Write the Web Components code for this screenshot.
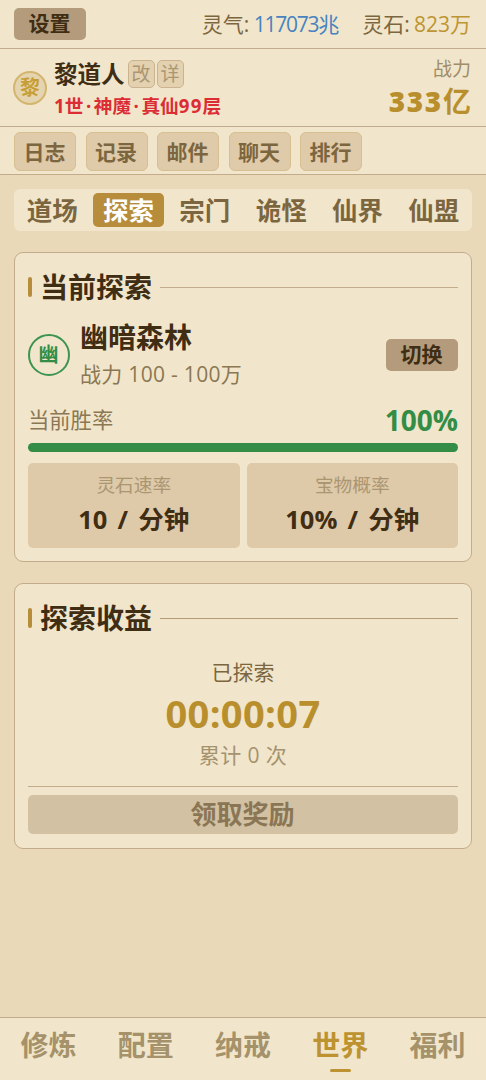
<!DOCTYPE html>
<html lang="zh-CN">
<head>
<meta charset="utf-8">
<title>探索</title>
<style>
html,body{margin:0;height:100%}
body{
  --ink:#3f2d14;--brown:#7c6640;--muted:#a5926e;--gold:#b98f2e;--green:#338d46;
  --paper:#f1e6cb;--line:#c3ac8b;--chip:#dfcaa9;--btn:#b39b7b;
  font-family:"Open Sans","Noto Sans CJK SC",sans-serif;color:var(--ink);background:#e9d9b8;
}
</style>
</head>
<body>
<game-app></game-app>
<script>
const define = (name, html) => {
  const tpl = document.createElement('template');
  tpl.innerHTML = html;
  customElements.define(name, class extends HTMLElement {
    constructor() {
      super();
      this.attachShadow({mode: 'open'}).append(tpl.content.cloneNode(true));
    }
  });
};

/* one line of text; size, leading and tracking come from custom properties */
define('text-line', `<style>
:host{display:block;white-space:nowrap;font-size:var(--s,21px);line-height:var(--h,28px);letter-spacing:var(--t,0);color:var(--c,inherit);font-weight:var(--w,400)}
</style><slot></slot>`);

define('solid-button', `<style>
:host{display:flex;align-items:center;justify-content:center;box-sizing:border-box;width:72px;height:32px;padding:0 1px 1px 0;border-radius:5px;background:var(--btn);font-size:21px;font-weight:700;line-height:1;white-space:nowrap}
:host([wide]){width:auto;height:39px;font-size:26px;background:#d2c1a3;color:#8a7654}
</style><slot></slot>`);

define('mini-badge', `<style>
:host{display:flex;align-items:center;justify-content:center;box-sizing:border-box;width:27px;height:28px;border:1.5px solid #cbb38f;border-radius:5px;background:#e3d1b0;color:#ab9673;font-size:19px;line-height:1}
</style><slot></slot>`);

define('round-seal', `<style>
:host{display:flex;flex:none;align-items:center;justify-content:center;box-sizing:border-box;width:34px;height:34px;padding-bottom:1px;border:2px solid #d3b56d;border-radius:50%;background:#e5d4b0;color:#c79e36;font-size:20px;font-weight:700;line-height:1}
:host([green]){width:42px;height:42px;padding:0 1px 0 0;border-color:#3c9450;background:none;color:#338d46}
</style><slot></slot>`);

define('resource-bar', `<style>
:host{display:flex;align-items:center;justify-content:space-between;box-sizing:border-box;height:49px;padding:0 15px 0 14px;border-bottom:1.5px solid var(--line)}
div{display:flex;gap:23px}
text-line{--c:#7c6640}
.k{letter-spacing:-.6px}
.q{color:#4683c0}.q b{font-weight:400;letter-spacing:-1.25px}.s{color:#bd9532}
</style><solid-button>设置</solid-button>
<div><text-line>灵气<span class="k">: </span><span class="q"><b>117073</b>兆</span></text-line><text-line>灵石<span class="k">: </span><span class="s">823万</span></text-line></div>`);

define('player-header', `<style>
:host{display:flex;box-sizing:border-box;height:78px;padding:0 15px 0 13px;border-bottom:1.5px solid var(--line)}
round-seal{margin-top:22px}
.id{margin-left:7px;padding-top:11px}
.n{display:flex;align-items:center;height:28px;gap:2px}
.n text-line{--s:23.5px;--w:700;margin-right:1px}
.r{--s:18.7px;--w:700;--c:#dc2c34;margin-top:4px}
.r span{margin:0 2.5px}
.r b{font-weight:700;letter-spacing:1.2px}
.p{margin-left:auto;padding-top:6px;text-align:right}
.p .a{--s:19px;--c:#a08c68}
.p .b{--s:28px;--w:700;--c:var(--gold);--h:36px}
.p b{font-weight:800;letter-spacing:1.7px}
</style><round-seal>黎</round-seal>
<div class="id"><div class="n"><text-line>黎道人</text-line><mini-badge>改</mini-badge><mini-badge>详</mini-badge></div><text-line class="r">1世<span>·</span>神魔<span>·</span>真仙<b>99</b>层</text-line></div>
<div class="p"><text-line class="a">战力</text-line><text-line class="b"><b>333</b>亿</text-line></div>`);

define('quick-link', `<style>
:host{display:flex;align-items:center;justify-content:center;box-sizing:border-box;width:62px;height:39px;padding:1px 1px 0 0;border:1.5px solid #d6bf91;border-radius:6px;background:var(--chip);color:#7c6640;font-size:21px;font-weight:700;line-height:1}
</style><slot></slot>`);

define('quick-links', `<style>
:host{display:flex;box-sizing:border-box;height:48px;padding:5px 14px 0;gap:9.5px;border-bottom:1.5px solid var(--line)}
</style><quick-link>日志</quick-link><quick-link>记录</quick-link><quick-link>邮件</quick-link><quick-link>聊天</quick-link><quick-link>排行</quick-link>`);

define('tab-item', `<style>
:host{display:flex;align-items:center;justify-content:center;margin:4px 3px;padding-top:1px;border-radius:5px;color:#7c6640;font-size:25.5px;font-weight:700;line-height:1}
:host([active]){background:#b78d3b;color:#fff}
</style><slot></slot>`);

define('world-tabs', `<style>
:host{display:grid;grid-template-columns:repeat(6,1fr);height:42px;margin:14px 14px 21px;border-radius:6px;background:var(--paper)}
</style><tab-item>道场</tab-item><tab-item active>探索</tab-item><tab-item>宗门</tab-item><tab-item>诡怪</tab-item><tab-item>仙界</tab-item><tab-item>仙盟</tab-item>`);

define('section-card', `<style>
:host{display:block;box-sizing:border-box;margin:0 14px 21px;padding:0 13px;border:1px solid var(--line);border-radius:9px;background:var(--paper)}
header{display:flex;align-items:center;height:36px;margin-top:16px}
i{width:4px;height:20px;border-radius:2px;background:#b78d3b;margin-right:8px}
hr{flex:1;height:1px;margin:0 0 0 8px;border:0;background:var(--rule,var(--line))}
text-line{--s:28px;--w:700;--h:36px}
</style><header><i></i><text-line><slot name="title"></slot></text-line><hr></header><slot></slot>`);

define('stat-tile', `<style>
:host{display:block;box-sizing:border-box;height:85px;padding-top:8px;border-radius:5px;background:#dec9a9;text-align:center}
.a{--s:18.7px;--c:#ab9672}
.b{--s:25.5px;--w:700;--h:36px;margin-top:2px;word-spacing:3.5px}
</style><text-line class="a"><slot name="label"></slot></text-line><text-line class="b"><slot></slot></text-line>`);

define('explore-now', `<style>
:host{display:block}
section-card{height:310px}
.place{display:flex;align-items:center;height:74px;margin-top:13px}
.place>div{margin-left:10px}
.n{--s:28px;--w:700;--h:36px;padding-top:1px}
.p{--s:21px;--h:36px;--c:#8b7753;--t:.3px;padding-top:1px}
.place solid-button{margin-left:auto}
.rate{display:flex;justify-content:space-between;align-items:center;height:36px;margin-top:10px}
.rate .l{--s:21.3px;--c:#8b7753}
.rate .v{--s:28px;--w:700;--c:var(--green)}
.bar{height:9px;margin-top:5px;border-radius:5px;background:#338d46}
.tiles{display:grid;grid-template-columns:1fr 1fr;gap:7px;margin-top:11px}
</style><section-card><span slot="title">当前探索</span>
<div class="place"><round-seal green>幽</round-seal><div><text-line class="n">幽暗森林</text-line><text-line class="p">战力 100 - 100万</text-line></div><solid-button>切换</solid-button></div>
<div class="rate"><text-line class="l">当前胜率</text-line><text-line class="v">100%</text-line></div>
<div class="bar"></div>
<div class="tiles"><stat-tile><span slot="label">灵石速率</span>10 / 分钟</stat-tile><stat-tile><span slot="label">宝物概率</span>10% / 分钟</stat-tile></div>
</section-card>`);

define('explore-gain', `<style>
:host{display:block;text-align:center}
section-card{height:266px;--rule:#b39b78}
.a{--c:#7c6640;margin-top:22px}
.t{--s:38px;--w:700;--h:44px;--c:var(--gold);--t:.4px;margin-top:5px}
.c{--c:#a5926e;--t:.4px;margin-top:6px}
.d{height:1px;margin:17px 0 8px;background:var(--line)}
</style><section-card><span slot="title">探索收益</span>
<text-line class="a">已探索</text-line><text-line class="t">00:00:07</text-line><text-line class="c">累计 0 次</text-line>
<div class="d"></div><solid-button wide>领取奖励</solid-button>
</section-card>`);

define('nav-item', `<style>
:host{display:flex;flex-direction:column;align-items:center;padding-top:9px;color:#a5926a;font-size:28px;font-weight:700;line-height:36px}
:host([active]){color:#bd9230}
:host([active])::after{content:"";width:21px;height:3px;margin-top:6px;border-radius:2px;background:#bd9230}
</style><slot></slot>`);

define('bottom-nav', `<style>
:host{display:grid;grid-template-columns:repeat(5,1fr);box-sizing:border-box;height:63px;margin-top:auto;border-top:1.5px solid var(--line);background:var(--paper)}
</style><nav-item>修炼</nav-item><nav-item>配置</nav-item><nav-item>纳戒</nav-item><nav-item active>世界</nav-item><nav-item>福利</nav-item>`);

define('game-app', `<style>
:host{display:flex;flex-direction:column;height:1080px;overflow:hidden;background:#e9d9b8}
.top{background:var(--paper)}
</style><div class="top"><resource-bar></resource-bar><player-header></player-header><quick-links></quick-links></div>
<world-tabs></world-tabs><explore-now></explore-now><explore-gain></explore-gain><bottom-nav></bottom-nav>`);
</script>
</body>
</html>
